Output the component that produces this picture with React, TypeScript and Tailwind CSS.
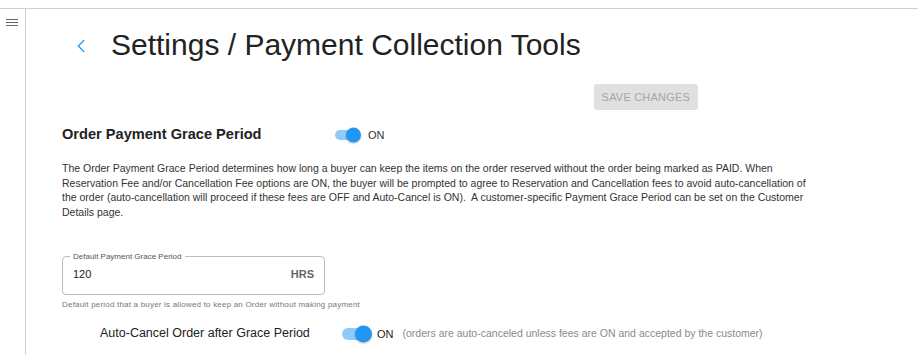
import { ChevronLeft } from 'lucide-react'

function Toggle({ size = 'sm' }: { size?: 'sm' | 'md' }) {
  const big = size === 'md'
  return (
    <span className={`relative inline-flex items-center ${big ? 'w-[31px] h-[18px]' : 'w-[27px] h-[16px]'}`}>
      <span className={`rounded-full bg-[#90caf9] ${big ? 'w-[28px] h-[12px] ml-[1px]' : 'w-[24px] h-[10px] ml-[1px]'}`} />
      <span
        className={`absolute right-0 top-1/2 -translate-y-1/2 rounded-full bg-[#2196f3] shadow-[0_1px_2px_rgba(0,0,0,0.25)] ${
          big ? 'w-[17px] h-[17px]' : 'w-[15px] h-[15px]'
        }`}
      />
    </span>
  )
}

export default function App() {
  return (
    <div className="w-[918px] h-[355px] overflow-hidden bg-white font-['Liberation_Sans',Arial,sans-serif] text-[#222]">
      <div className="h-[8px]" />
      <div className="flex h-[347px] border-t border-[#d0d0d0]">
        <aside className="w-[26px] shrink-0 border-r border-[#d0d0d0] pt-[10px] pl-[6px]">
          <div className="flex flex-col gap-[2px] w-[12px]">
            <span className="h-[1px] bg-[#666]" />
            <span className="h-[1px] bg-[#666]" />
            <span className="h-[1px] bg-[#666]" />
          </div>
        </aside>

        <main className="flex-1 min-w-0 pl-[36px]">
          <div className="flex items-center h-[36px] mt-[18px] ml-[8px]">
            <ChevronLeft size={22} strokeWidth={1.3} className="text-[#2196f3] mr-[19px] mt-[2px]" />
            <h1 className="text-[30px] leading-[36px] text-[#222]">Settings / Payment Collection Tools</h1>
          </div>

          <div className="flex justify-end w-[636px] mt-[21px]">
            <button
              type="button"
              className="h-[26px] px-[8px] rounded-[3px] bg-[#e0e0e0] text-[#a6a6a6] text-[11px] tracking-[0.2px] uppercase"
            >
              Save Changes
            </button>
          </div>

          <div className="flex items-center mt-[12px] h-[26px]">
            <h2 className="w-[272px] text-[14.6px] font-bold text-[#222]">Order Payment Grace Period</h2>
            <Toggle />
            <span className="ml-[7px] text-[11px] text-[#333]">ON</span>
          </div>

          <p className="mt-[13px] w-[752px] text-[10.5px] leading-[14.7px] text-[#333]">
            The Order Payment Grace Period determines how long a buyer can keep the items on the order reserved without the
            order being marked as PAID. When Reservation Fee and/or Cancellation Fee options are ON, the buyer will be prompted
            to agree to Reservation and Cancellation fees to avoid auto-cancellation of the order (auto-cancellation will proceed
            if these fees are OFF and Auto-Cancel is ON).&nbsp; A customer-specific Payment Grace Period can be set on the
            Customer Details page.
          </p>

          <fieldset className="mt-[33px] w-[263px] h-[42px] border border-[#bdbdbd] rounded-[4px] px-[6px] flex items-center">
            <legend className="px-[3px] ml-[1px] text-[8px] leading-[8px] text-[#555]">Default Payment Grace Period</legend>
            <span className="ml-[4px] text-[11px] text-[#222] -mt-[6px]">120</span>
            <span className="ml-auto mr-[4px] text-[11px] font-bold text-[#666] -mt-[6px]">HRS</span>
          </fieldset>
          <p className="mt-[4px] text-[8px] tracking-[0.2px] text-[#777]">
            Default period that a buyer is allowed to keep an Order without making payment
          </p>

          <div className="flex items-center mt-[13px] ml-[38px] h-[20px]">
            <span className="w-[241px] text-[12.5px] text-[#222]">Auto-Cancel Order after Grace Period</span>
            <Toggle size="md" />
            <span className="ml-[5px] text-[11px] text-[#222]">ON</span>
            <span className="ml-[9px] text-[10.5px] text-[#8a8a8a]">
              (orders are auto-canceled unless fees are ON and accepted by the customer)
            </span>
          </div>
        </main>
      </div>
    </div>
  )
}
